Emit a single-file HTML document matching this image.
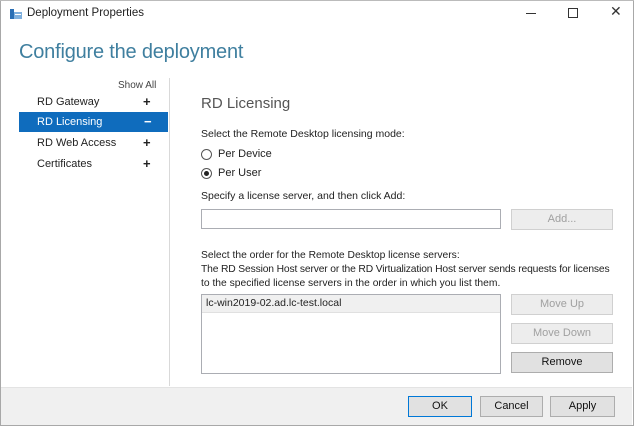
<!DOCTYPE html>
<html><head><style>
*{margin:0;padding:0;box-sizing:border-box}
body{width:634px;height:426px;background:#fff;font-family:"Liberation Sans",sans-serif;font-size:11px;color:#222;position:relative;overflow:hidden}
.a{position:absolute;white-space:nowrap}
.btn{position:absolute;border:1px solid #adadad;background:#e1e1e1;text-align:center;font-size:11px;line-height:19px;color:#111}
.dis{border-color:#d0d0d0;background:#ededed;color:#a0a0a0}
.box{position:absolute;border:1px solid #abadb3;background:#fff}
</style></head><body>
<div class="a" style="left:0;top:0;width:634px;height:426px;border:1px solid #a8a8a8;border-top:none"></div>
<div class="a" style="left:0;top:0;width:634px;height:1px;background:#bbb"></div>
<svg class="a" style="left:9px;top:6px" width="14" height="14"><rect x="1" y="3" width="4" height="10" fill="#2a6fb5"/><rect x="5" y="6" width="8" height="7" fill="#7fb0de"/><rect x="6" y="8" width="6" height="1" fill="#fff"/></svg>
<div class="a" style="left:27px;top:7px;font-size:11.5px">Deployment Properties</div>
<div class="a" style="left:526px;top:13px;width:10px;height:1px;background:#333"></div>
<div class="a" style="left:568px;top:8px;width:10px;height:10px;border:1px solid #333"></div>
<div class="a" style="left:610px;top:3px;font-size:14px;color:#333">✕</div>
<div class="a" style="left:19px;top:41px;font-size:20px;color:#3f7f9f;letter-spacing:-0.2px">Configure the deployment</div>
<div class="a" style="left:118px;top:80px;font-size:10px;color:#444">Show All</div>
<div class="a" style="left:169px;top:78px;width:1px;height:308px;background:#d9d9d9"></div>
<div class="a" style="left:19px;top:112px;width:149px;height:20px;background:#0f6cbd"></div>
<div class="a" style="left:37px;top:96px">RD Gateway</div><div class="a" style="left:143px;top:94px;font-size:13px;font-weight:bold">+</div>
<div class="a" style="left:37px;top:116px;color:#fff">RD Licensing</div><div class="a" style="left:144px;top:114px;font-size:13px;color:#fff;font-weight:bold">−</div>
<div class="a" style="left:37px;top:137px">RD Web Access</div><div class="a" style="left:143px;top:135px;font-size:13px;font-weight:bold">+</div>
<div class="a" style="left:37px;top:158px">Certificates</div><div class="a" style="left:143px;top:156px;font-size:13px;font-weight:bold">+</div>
<div class="a" style="left:201px;top:95px;font-size:15px;color:#555">RD Licensing</div>
<div class="a" style="left:201px;top:128px;font-size:10.5px">Select the Remote Desktop licensing mode:</div>
<div class="a" style="left:201px;top:149px;width:11px;height:11px;border:1px solid #555;border-radius:50%"></div>
<div class="a" style="left:218px;top:148px">Per Device</div>
<div class="a" style="left:201px;top:168px;width:11px;height:11px;border:1px solid #555;border-radius:50%"><div style="margin:2px;width:5px;height:5px;border-radius:50%;background:#222"></div></div>
<div class="a" style="left:218px;top:167px">Per User</div>
<div class="a" style="left:201px;top:190px;font-size:10.5px">Specify a license server, and then click Add:</div>
<div class="box" style="left:201px;top:209px;width:300px;height:20px"></div>
<div class="btn dis" style="left:511px;top:209px;width:102px;height:21px">Add...</div>
<div class="a" style="left:201px;top:250px;font-size:10.3px">Select the order for the Remote Desktop license servers:</div>
<div class="a" style="left:201px;top:264px;font-size:10.3px;letter-spacing:-0.15px">The RD Session Host server or the RD Virtualization Host server sends requests for licenses</div>
<div class="a" style="left:201px;top:278px;font-size:10.3px">to the specified license servers in the order in which you list them.</div>
<div class="box" style="left:201px;top:294px;width:300px;height:80px"><div style="background:#f0f0f0;height:18px;padding-left:4px;line-height:17px;border-bottom:1px solid #e0e0e0;font-size:10.5px">lc-win2019-02.ad.lc-test.local</div></div>
<div class="btn dis" style="left:511px;top:294px;width:102px;height:21px">Move Up</div>
<div class="btn dis" style="left:511px;top:323px;width:102px;height:21px">Move Down</div>
<div class="btn" style="left:511px;top:352px;width:102px;height:21px">Remove</div>
<div class="a" style="left:1px;top:387px;width:631px;height:38px;background:#f0f0f0;border-top:1px solid #e3e3e3"></div>
<div class="btn" style="left:408px;top:396px;width:64px;height:21px;border-color:#0078d7">OK</div>
<div class="btn" style="left:480px;top:396px;width:63px;height:21px">Cancel</div>
<div class="btn" style="left:550px;top:396px;width:65px;height:21px">Apply</div>
</body></html>
